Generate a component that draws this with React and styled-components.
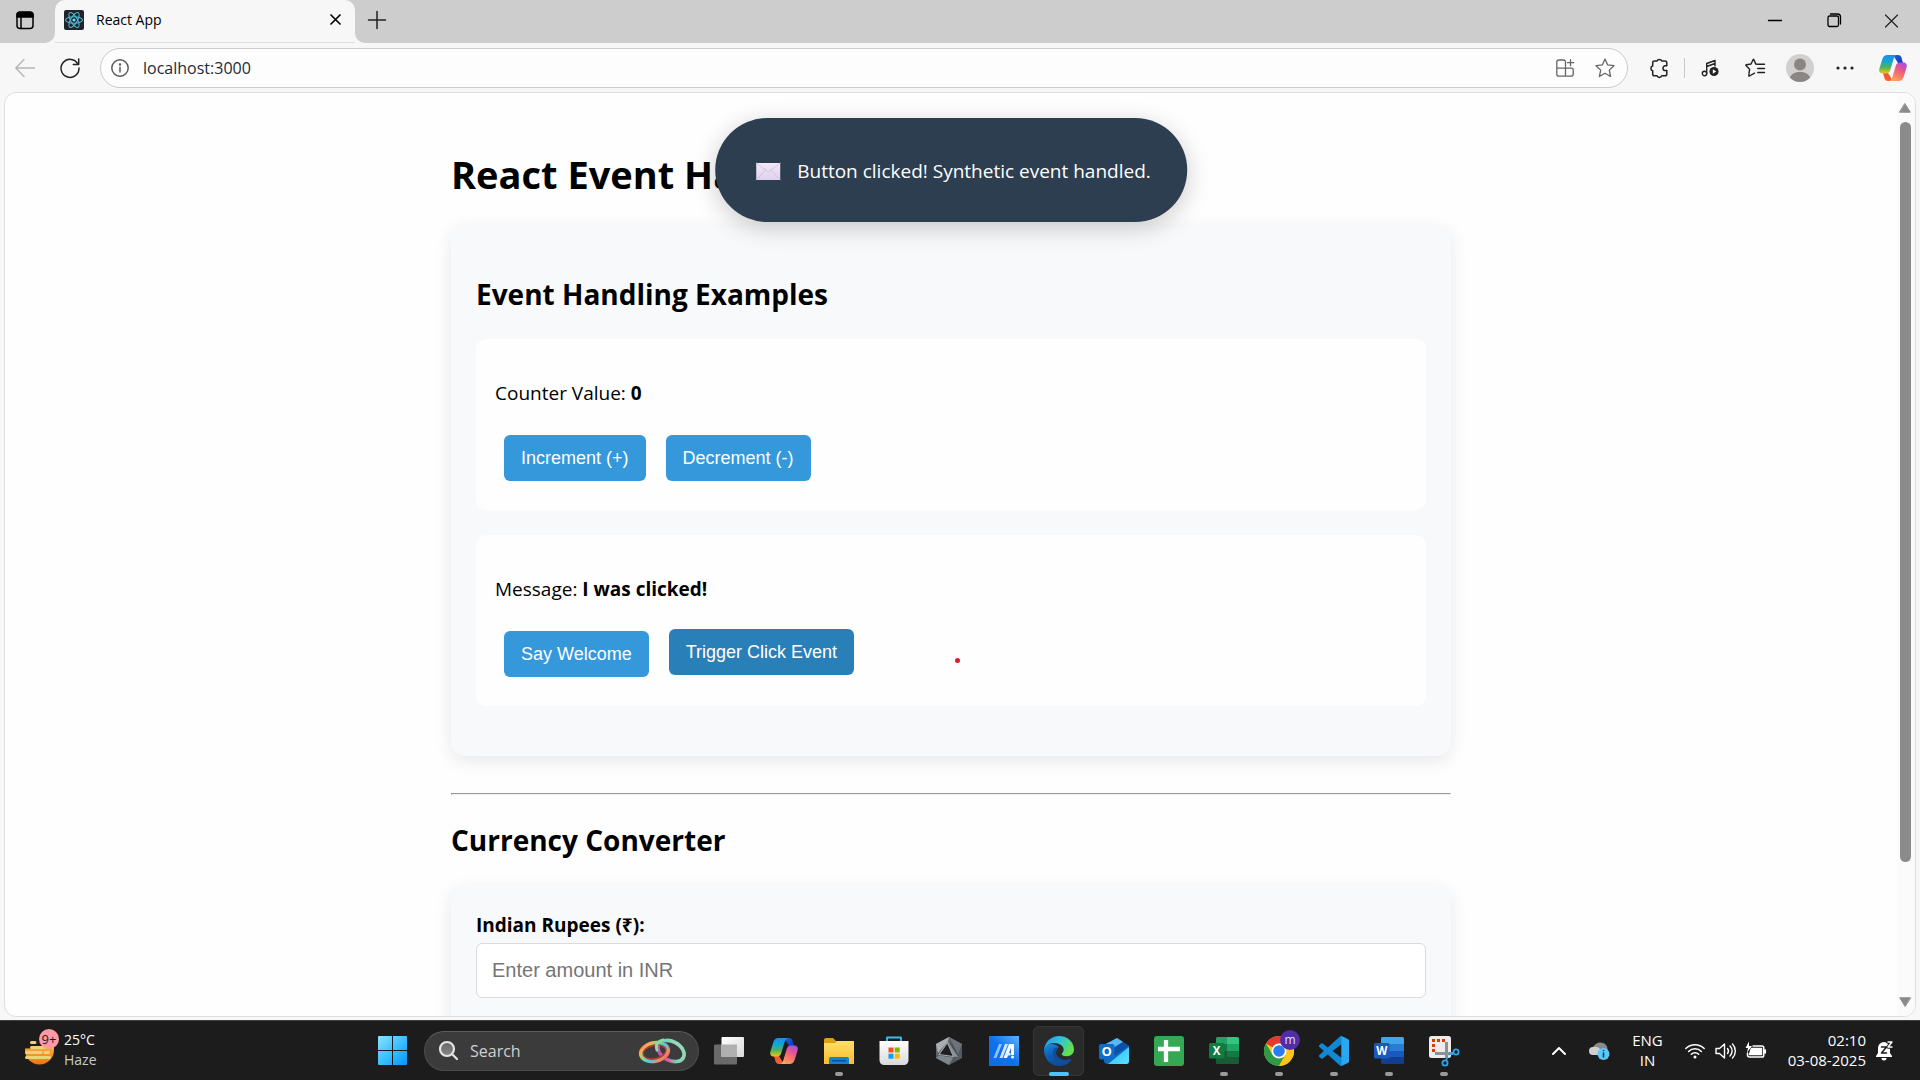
import React, { useState } from "react";
import styled, { createGlobalStyle, css } from "styled-components";

const UI = `"Segoe UI", "Open Sans", "Noto Sans", sans-serif`;
const ARIAL = `"Liberation Sans", Arial, sans-serif`;

const GlobalStyle = createGlobalStyle`
  *, *::before, *::after { box-sizing: border-box; }
  body { margin: 0; font-family: ${UI}; color: #000; overflow: hidden; }
  button { font: inherit; color: inherit; border: 0; padding: 0; background: none; }
  svg { display: block; overflow: visible; }
`;

/* ---------- window frame ---------- */

const Desktop = styled.div`
  display: flex;
  flex-direction: column;
  height: 100vh;
  background: #f7f7f7;
`;

const TabStrip = styled.header`
  display: flex;
  align-items: stretch;
  height: 43px;
  background: #cdcdcd;
  border-bottom: 1px solid #dedede;
`;

const StripStart = styled.div`
  display: flex;
  align-items: center;
  width: 55px;
  padding: 0 0 3px 16px;
  border-bottom-right-radius: 10px;
  background: #cdcdcd;
`;

const TabBacking = styled.div`
  display: flex;
  flex: ${(p) => (p.$grow ? 1 : "none")};
  height: 43px;
  background: linear-gradient(#cdcdcd 50%, #f7f7f7 50%);
`;

const Tab = styled.div`
  display: flex;
  align-items: center;
  gap: 12px;
  width: 300px;
  padding: 0 14px 3px 9px;
  border-radius: 10px 10px 0 0;
  background: #f7f7f7;
  font-size: 14px;
  line-height: 20px;
`;

const TabTitle = styled.span`
  flex: 1;
`;

const StripRest = styled.div`
  display: flex;
  flex: 1;
  align-items: center;
  justify-content: space-between;
  padding: 0 0 3px 13px;
  border-bottom-left-radius: 10px;
  background: #cdcdcd;
`;

const WindowControls = styled.div`
  display: flex;
`;

const IconButton = styled.button`
  display: flex;
  align-items: center;
  justify-content: center;
  flex: none;
  width: ${(p) => p.$w || 32}px;
  height: 32px;
  color: ${(p) => p.$color || "#222"};
`;

const Toolbar = styled.nav`
  display: flex;
  align-items: center;
  height: 49px;
  padding: 0 8px;
`;

const NavButtons = styled.div`
  display: flex;
  gap: 13px;
  padding: 0 14px 0 1px;
`;

const Address = styled.label`
  display: flex;
  flex: 1;
  align-items: center;
  height: 40px;
  padding: 0 6px 0 10px;
  border: 1px solid #cbcbcb;
  border-radius: 20px;
  background: #fdfdfd;
  gap: 14px;
`;

const AddressInput = styled.input`
  flex: 1;
  min-width: 0;
  padding: 0;
  border: 0;
  outline: 0;
  background: none;
  color: #222a3a;
  font: 16px/24px ${UI};
`;

const AddressTools = styled.div`
  display: flex;
  gap: 8px;
`;

const Actions = styled.div`
  display: flex;
  align-items: center;
  gap: 13px;
  padding-left: 15px;
`;

const Divider = styled.span`
  width: 1px;
  height: 20px;
  margin: 0 -4px;
  background: #c8c8c8;
`;

/* ---------- page ---------- */

const Viewport = styled.div`
  position: relative;
  display: flex;
  flex: 1;
  min-height: 0;
  margin: 0 4px 3px;
  overflow: hidden;
  border: 1px solid #dedede;
  border-radius: 12px;
  background: #fefefe;
`;

const Scroller = styled.main`
  position: relative;
  flex: 1;
  overflow: hidden;
`;

const Container = styled.div`
  max-width: 1000px;
  margin: 0 auto;
  padding-top: 54px;
`;

const Title = styled.h1`
  margin: 0 0 24px;
  font-size: 38px;
  line-height: 54px;
  font-weight: 700;
  white-space: nowrap;
`;

const Card = styled.section`
  padding: 25px;
  border-radius: 14px;
  background: #f8f9fb;
  box-shadow: 0 5px 18px rgba(0, 0, 0, 0.09);
`;

const Heading = styled.h2`
  margin: 24px 0;
  font-size: 28px;
  line-height: 41px;
  font-weight: 700;
`;

const Panel = styled.div`
  margin-bottom: 25px;
  padding: 20px 19px;
  border-radius: 10px;
  background: #fefefe;
`;

const Line = styled.p`
  margin: 20px 0 18px;
  font-size: 19px;
  line-height: 29px;
`;

const ButtonRow = styled.div`
  display: flex;
  gap: 20px;
  padding: 9px;
`;

const ActionButton = styled.button`
  height: 46px;
  padding: 0 17px;
  border-radius: 6px;
  background: #3498db;
  color: #fff;
  font: 18px/20px ${ARIAL};
  ${(p) =>
    p.$hovered &&
    css`
      background: #2980b9;
      transform: translateY(-2px);
    `}
`;

const Rule = styled.hr`
  margin: 37px 0 25px;
  border: 1px solid #eee;
  border-top-color: #9a9a9a;
  border-left-color: #9a9a9a;
`;

const Label = styled.label`
  display: block;
  margin-bottom: 2px;
  font-size: 19px;
  line-height: 31px;
  font-weight: 700;
`;

const Field = styled.input`
  display: block;
  width: 100%;
  height: 55px;
  padding: 0 15px;
  border: 1px solid #d9dbde;
  border-radius: 6px;
  background: #fff;
  outline: 0;
  font: 20px/24px ${ARIAL};
  &::placeholder { color: #757575; opacity: 1; }
`;

const Below = styled.div`
  height: 240px;
`;

const Toast = styled.div`
  position: absolute;
  top: 25px;
  left: 50%;
  display: flex;
  align-items: center;
  gap: 17px;
  height: 104px;
  padding: 2px 36px 0 41px;
  border-radius: 62px;
  background: #2c3e50;
  box-shadow: 0 6px 25px rgba(0, 0, 0, 0.2);
  color: #fff;
  font-size: 19px;
  line-height: 27px;
  white-space: nowrap;
  transform: translateX(-50%);
`;

const Pointer = styled.span`
  position: absolute;
  left: 950px;
  top: 565px;
  width: 5px;
  height: 5px;
  border-radius: 50%;
  background: #e0182d;
`;

const ScrollBar = styled.div`
  display: flex;
  flex-direction: column;
  align-items: center;
  width: 18px;
  padding: 10px 2px 9px 0;
  background: #fbfbfb;
`;

const Track = styled.div`
  flex: 1;
  width: 11px;
  margin: 9px 0;
`;

const Thumb = styled.div`
  height: 85.5%;
  border-radius: 6px;
  background: #8b8b8b;
`;

/* ---------- taskbar ---------- */

const Taskbar = styled.footer`
  display: flex;
  align-items: stretch;
  flex: none;
  height: 60px;
  border-top: 1px solid #3d3f42;
  background: #1c1c1c;
  color: #fff;
  font-size: 15px;
  line-height: 20px;
`;

const Weather = styled.button`
  display: flex;
  align-items: center;
  flex: none;
  width: 378px;
  padding-left: 25px;
  gap: 5px;
  text-align: left;
  font-size: 14px;
`;

const Muted = styled.span`
  color: #c9c9c9;
`;

const Stack = styled.span`
  display: flex;
  flex-direction: column;
  padding-bottom: 2px;
  text-align: ${(p) => p.$align || "left"};
`;

const Center = styled.div`
  display: flex;
  align-items: center;
`;

const Search = styled.label`
  display: flex;
  align-items: center;
  gap: 12px;
  width: 275px;
  height: 40px;
  margin: 0 2px 0 17px;
  padding: 0 11px 0 14px;
  border: 1px solid #4d4d4d;
  border-top-color: #5c5c5c;
  border-radius: 20px;
  background: #3b3b3b;
`;

const SearchInput = styled.input`
  flex: 1;
  min-width: 0;
  padding: 0;
  border: 0;
  outline: 0;
  background: none;
  font: 16px/22px ${UI};
  &::placeholder { color: #cfcfcf; opacity: 1; }
`;

const AppButton = styled.button`
  position: relative;
  display: flex;
  align-items: center;
  justify-content: center;
  width: 51px;
  height: 50px;
  margin: 0 2px;
  border-radius: 6px;
  ${(p) => p.$state === "active" && css`
    background: #2a2a2a;
    box-shadow: inset 0 0 0 1px #353535;
  `}
  &::after {
    content: "";
    position: absolute;
    bottom: 0;
    width: ${(p) => (p.$state === "active" ? 20 : 8)}px;
    height: 4px;
    border-radius: 2px;
    background: ${(p) => ({ active: "#4cc2ff", open: "#9a9a9a" }[p.$state] || "none")};
  }
`;

const Tray = styled.div`
  display: flex;
  align-items: center;
  margin-left: auto;
  padding-right: 26px;
  gap: 10px;
`;

const TrayGroup = styled.div`
  display: flex;
  align-items: center;
  gap: ${(p) => p.$gap}px;
  padding: 0 ${(p) => p.$pad || 0}px;
`;

/* ---------- drawings ---------- */

const Ico = ({ w = 20, h, vb, children, sw = 1.4, ...rest }) => (
  <svg
    width={w}
    height={h || w}
    viewBox={vb || `0 0 ${w} ${h || w}`}
    fill="none"
    stroke="currentColor"
    strokeWidth={sw}
    strokeLinecap="round"
    strokeLinejoin="round"
    aria-hidden="true"
    {...rest}
  >
    {children}
  </svg>
);

const Pic = (p) => <Ico stroke="none" {...p} />;

const Grad = ({ id, stops, x1 = 0, y1 = 0, x2 = 0, y2 = 1 }) => (
  <linearGradient id={id} x1={x1} y1={y1} x2={x2} y2={y2}>
    {stops.map((c, i) => (
      <stop key={i} offset={i / (stops.length - 1)} stopColor={c} />
    ))}
  </linearGradient>
);

const HiddenDefs = styled.svg`
  position: absolute;
  width: 0;
  height: 0;
`;

const Gradients = () => (
  <HiddenDefs aria-hidden="true">
    <defs>
      <Grad id="cpA" stops={["#1b8ff0", "#12a5d8", "#4fb45a", "#f2c514"]} x2={0} />
      <Grad id="cpB" stops={["#a34df0", "#e4548f", "#f9776a", "#ffa659"]} x1={0.8} x2={0.3} />
      <Grad id="cpC" stops={["#0b6ee0", "#1a2fb8"]} x2={1} />
      <Grad id="cpD" stops={["#f8523a", "#f2622c"]} />
      <Grad id="win" stops={["#8be2ff", "#3cc0ff", "#0a93fb"]} x2={1} />
      <Grad id="sun" stops={["#ffd45c", "#f0730f"]} />
      <Grad id="folder" stops={["#ffdf6b", "#f8bd2b"]} />
      <Grad id="bag" stops={["#ffffff", "#d9d9d9"]} />
      <Grad id="edgeTop" stops={["#1a94e0", "#2fc1e0", "#62e04b"]} x2={1} y2={0.5} />
      <Grad id="edgeLow" stops={["#1a8fe0", "#0f5bb0", "#0c4a94"]} x2={0.6} />
      <Grad id="asus" stops={["#0d6be8", "#0f72ea", "#5fb2ff"]} y1={1} x2={1} y2={0} />
      <Grad id="hex" stops={["#7d838a", "#4a4f56", "#5d636a"]} x2={1} />
      <Grad id="ringA" stops={["#f2685e", "#f0b556", "#6fe0a0", "#4cc3f0", "#f08c5a", "#e34a94"]} x2={1} />
      <Grad id="ringB" stops={["#7fe0a8", "#9bd4c0", "#6dd6b0", "#ec4f9a", "#7e55e0"]} x1={1} x2={0} />
      <Grad id="view" stops={["#ffffff", "#d8d8d8"]} x2={1} />
      <Grad id="mail" stops={["#f3eaf6", "#dfd0ef"]} />
      <Grad id="outl" stops={["#2bb8f2", "#5ce3ff"]} x2={1} />
      <Grad id="lens" stops={["#666", "#888"]} />
    </defs>
  </HiddenDefs>
);

const Copilot = ({ w = 28 }) => (
  <Pic w={w} h={w} vb="0 0 28 28">
    <path d="M14 1h5c2 0 3 1 3.600 3l1.400 5h-5z" fill="url(#cpC)" />
    <path d="M14 27H9c-2 0-3-1-3.600-3L4 19h5z" fill="url(#cpD)" />
    <path d="M8.500 1H18c-2 .5-2.800 2-3.400 4l-3.300 11c-.7 2.200-1.800 3.500-4 3.500H4C1 19.500-.4 17.500.4 14.500L3.400 5C4.300 2.200 5.800 1 8.500 1z" fill="url(#cpA)" />
    <path d="M19.500 27H10c2-.5 2.800-2 3.400-4l3.300-11c.7-2.200 1.800-3.500 4-3.500H24c3 0 4.400 2 3.600 5l-3 9.500c-.9 2.800-2.400 4-5.100 4z" fill="url(#cpB)" />
  </Pic>
);

const ReactMark = () => (
  <Pic w={20}>
    <rect width="20" height="20" rx="2" fill="#20232a" />
    <g fill="none" stroke="#4fb8d4" strokeWidth="1.100">
      {[0, 60, 120].map((a) => (
        <ellipse key={a} cx="10" cy="10" rx="8.500" ry="3.300" transform={`rotate(${a} 10 10)`} />
      ))}
    </g>
    <circle cx="10" cy="10" r="1.600" fill="#61dafb" />
  </Pic>
);

const Office = ({ letter, dark, bars }) => (
  <Pic w={30}>
    <clipPath id={`of${letter}`}><rect x="7" y="1" width="23" height="27" rx="1.500" /></clipPath>
    <g clipPath={`url(#of${letter})`}>
      {bars.map(([x, y, w, h, c], i) => (
        <rect key={i} x={x} y={y} width={w} height={h} fill={c} />
      ))}
    </g>
    <rect y="7" width="15.500" height="15.500" rx="1.500" fill={dark} />
    <text x="7.700" y="18.800" textAnchor="middle" fill="#fff" fontFamily="Open Sans" fontWeight="700" fontSize="11.500">{letter}</text>
  </Pic>
);

const excelBars = [
  [7, 1, 12, 7, "#21a366"], [18, 1, 12, 7, "#33c481"], [7, 8, 12, 7, "#107c41"], [18, 8, 12, 7, "#21a366"],
  [7, 15, 12, 7, "#185c37"], [18, 15, 12, 7, "#107c41"], [7, 21, 23, 8, "#185c37"],
];
const wordBars = [[7, 1, 23, 7, "#41a5ee"], [7, 8, 23, 7, "#2b7cd3"], [7, 15, 23, 7, "#185abd"], [7, 21, 23, 8, "#103f91"]];

const Chrome = () => (
  <Pic w={30}>
    <circle cx="15" cy="15" r="15" fill="#ffc517" />
    <path d="M15 15 2 7.500A15 15 0 0 1 28 7.500H15z" fill="#e33b2e" />
    <path d="M2 7.500A15 15 0 0 0 15 30l6.500-11.300L15 15 8.500 18.700z" fill="#2c9a46" />
    <path d="M15 7.500h13A15 15 0 0 1 15 30l6.500-11.300z" fill="#ffc517" />
    <circle cx="15" cy="15" r="7.500" fill="#fff" />
    <circle cx="15" cy="15" r="5.800" fill="#2b7cf0" />
    <circle cx="26" cy="4" r="10" fill="#512da8" />
    <text x="26" y="8" textAnchor="middle" fill="#e6dcff" fontFamily="Open Sans" fontSize="12">m</text>
  </Pic>
);

const Snip = () => (
  <Pic w={30}>
    <rect y="0" width="22" height="22" rx="2.500" fill="#ececec" />
    <path d="M4.500 16V4.500H16" stroke="#d83b01" strokeWidth="3" strokeDasharray="3 2" strokeLinecap="butt" strokeLinejoin="miter" />
    <path d="M17.500 6v16M6 17.500h18" stroke="#8a9199" strokeWidth="3" strokeLinecap="butt" />
    <g stroke="#2aa4e8" strokeWidth="1.800"><circle cx="27" cy="16" r="2.600" /><circle cx="16" cy="27" r="2.600" /><path d="M24.500 17 20 18.500M17 24.500 18.500 21" /></g>
  </Pic>
);

const apps = [
  { name: "Task View", icon: <Pic w={30}><rect x="0" y="8.500" width="23" height="20" rx="1" fill="#6a6a6a" /><rect x="7.500" y="1" width="22.500" height="20" rx="1" fill="url(#view)" /><path d="M7.500 8.500H23V21H7.500z" fill="#b0b0b0" /></Pic> },
  { name: "Copilot", icon: <Copilot w={28} /> },
  { name: "File Explorer", state: "open", icon: <Pic w={30}><path d="M0 4c0-1 .7-2 2-2h7l3 3h17c.6 0 1 .4 1 1v6H0z" fill="#dd9f0b" /><path d="M0 7h11l2-2h16c.6 0 1 .4 1 1v22H0z" fill="url(#folder)" /><path d="M5 28v-5c0-1.400.8-2 2-2h16c1.200 0 2 .6 2 2v5z" fill="#1183d6" /><path d="M8.500 24.700h13" stroke="#0b4f92" strokeWidth="1.400" /></Pic> },
  { name: "Microsoft Store", icon: <Pic w={30}><path d="M8 6V1.500h14V6" stroke="#37c0ee" strokeWidth="1.800" /><path d="M.5 5h29v19c0 3-2 5-5 5h-19c-3 0-5-2-5-5z" fill="url(#bag)" /><path d="M9.500 11.500h5v5h-5z" fill="#f25022" /><path d="M15.700 11.500h5v5h-5z" fill="#7fba00" /><path d="M9.500 17.700h5v5h-5z" fill="#00a4ef" /><path d="M15.700 17.700h5v5h-5z" fill="#ffb900" /></Pic> },
  { name: "Armoury Crate", icon: <Pic w={30}><path d="M15 1 28 8v14l-13 7L2 22V8z" fill="url(#hex)" /><path d="M15 1 2 8l2 9L14 5z" fill="#a9aeb4" /><path d="M15 1 28 8l-4 10z" fill="#6d737a" /><path d="M13.500 6.500 19.500 20.500 5 18.500z" fill="#1d1f22" stroke="#a4a9af" strokeWidth="1.200" /><path d="M14 5.500 19.500 20.500 24 21z" fill="#8c9299" /><path d="M2 22 15 29 19 21.500 5 19.500z" fill="#80868d" /></Pic> },
  { name: "MyASUS", icon: <Pic w={30}><path d="M0 0h30v30H0z" fill="url(#asus)" /><path d="M10 8h3L7.500 22h-3z" fill="#8cc0ff" /><path d="M16 8h3l-5.500 14h-3z" fill="#cfe4ff" /><path d="M20 8h5v11h-3v-7.500L18 22h-3.500z" fill="#fff" /><path d="M17 17h4.500v2.500H16z" fill="#dcebff" /><circle cx="23.500" cy="21" r="1.500" fill="#fff" /></Pic> },
  { name: "Microsoft Edge", state: "active", icon: <Pic w={30}><path d="M0 14c0 9 6.500 16 15 16 6 0 10.200-3 12-6.300.3-.6-.2-.9-.7-.6C21.500 25.500 12.500 23.500 12 17c-.2-2.600 1.200-4.600 3-5.500C13 8.500 9.500 8 7 8c-4 0-7 3-7 6z" fill="url(#edgeLow)" /><path d="M9 15c-.5 7 4.500 14 12 13.500 3-1 5-3 6-4.800.3-.6-.2-.9-.7-.6C21.500 25.500 12.500 23.500 12 17c-.2-2.600 1.200-4.600 3-5.500-3 0-5.700 1-6 3.500z" fill="#0d4f9e" /><path d="M0 14C1 5.500 7.500 0 15 0c8.500 0 15 6.200 15 13.500 0 4.500-3.500 6.700-7 6.700-3.300 0-5.200-1-5.200-2 0-1 1.900-1.700 1.900-4.600C19.700 10 15.500 7 10.500 7 5 7 1 10 0 14z" fill="url(#edgeTop)" /></Pic> },
  { name: "Outlook", icon: <Pic w={30}><path d="M5 9 18 2l12 8v15c0 2-1 3-3 3H9c-2 0-4-1-4-3z" fill="#0f6cbd" /><path d="m5 9 13-7 6 4-16 10z" fill="#58b8f2" /><path d="m8 16 16-10 6 4-17 11z" fill="#0a4fa8" /><path d="M30 11v14c0 2-1 3-3 3H9z" fill="url(#outl)" /><rect y="8" width="15.500" height="15.500" rx="2" fill="#0f6cc9" /><text x="7.700" y="20.300" textAnchor="middle" fill="#fff" fontFamily="Open Sans" fontWeight="700" fontSize="13">O</text></Pic> },
  { name: "Sheets", icon: <Pic w={30}><rect width="30" height="30" rx="3" fill="#34a853" /><path d="M12 4v22M4 13h22" stroke="#fff" strokeWidth="4.300" strokeLinecap="butt" /></Pic> },
  { name: "Excel", state: "open", icon: <Office letter="X" dark="#107c41" bars={excelBars} /> },
  { name: "Chrome", state: "open", icon: <Chrome /> },
  { name: "Visual Studio Code", state: "open", icon: <Pic w={30} vb="0 0 24 24"><path fill="#1288d4" d="M23.150 2.587 18.210.21a1.494 1.494 0 0 0-1.705.29l-9.460 8.630-4.120-3.128a.999.999 0 0 0-1.276.057L.327 7.261A1 1 0 0 0 .326 8.740L3.899 12 .326 15.260a1 1 0 0 0 .001 1.479L1.650 17.940a.999.999 0 0 0 1.276.057l4.120-3.128 9.460 8.630a1.492 1.492 0 0 0 1.704.290l4.942-2.377A1.500 1.500 0 0 0 24 20.060V3.939a1.500 1.500 0 0 0-.850-1.352zm-5.146 14.861L10.826 12l7.178-5.448v10.896z" /><path fill="#2aa7f2" d="M18 0l5.150 2.587A1.500 1.500 0 0 1 24 3.939V20.060a1.500 1.500 0 0 1-.850 1.352L18 23.900z" /></Pic> },
  { name: "Word", state: "open", icon: <Office letter="W" dark="#185abd" bars={wordBars} /> },
  { name: "Snipping Tool", state: "open", icon: <Snip /> },
];

const STAR = "M10 1l2.700 5.900 6.300.8-4.700 4.400 1.300 6.400L10 15.300l-5.600 3.200 1.300-6.400L1 7.700l6.300-.8z";

/* ---------- sections ---------- */

function BrowserChrome() {
  return (
    <>
      <TabStrip>
        <TabBacking>
          <StripStart>
            <Ico w={18} sw={1.500}><rect x="1" y="1.500" width="16" height="16" rx="3" /><path d="M1 6V4c0-2 1-3 3-3h10c2 0 3 1 3 3v2z" fill="currentColor" /><path d="M5 6v11" /></Ico>
          </StripStart>
        </TabBacking>
        <Tab>
          <ReactMark />
          <TabTitle>React App</TabTitle>
          <Ico w={11} sw={1.600} strokeLinecap="butt"><path d="M.5.5l10 10M10.500.5l-10 10" /></Ico>
        </Tab>
        <TabBacking $grow>
          <StripRest>
            <Ico w={18} sw={1.500} color="#222"><path d="M9 .5v17M.5 9h17" /></Ico>
            <WindowControls>
              <IconButton $w={60} aria-label="Minimize"><Ico w={14} sw={1.300} color="#000"><path d="M.5 7.500h13" /></Ico></IconButton>
              <IconButton $w={58} aria-label="Restore"><Ico w={14} sw={1.300} color="#000"><rect x="1" y="3" width="10.500" height="10.500" rx="1.500" /><path d="M3.500 1h7c2 0 3 1 3 3v7" /></Ico></IconButton>
              <IconButton $w={57} aria-label="Close"><Ico w={13} sw={1.200}><path d="M.5 1l12 12M12.500 1l-12 12" /></Ico></IconButton>
            </WindowControls>
          </StripRest>
        </TabBacking>
      </TabStrip>
      <Toolbar>
        <NavButtons>
          <IconButton $color="#b5b5b5" aria-label="Back"><Ico w={20}><path d="M19.500 10H1M9 1.500.8 10 9 18.500" /></Ico></IconButton>
          <IconButton aria-label="Refresh"><Ico w={20} sw={1.500}><path d="M18 6.200A9 9 0 1 0 19 10M18.700 1v5.400h-5.400" /></Ico></IconButton>
        </NavButtons>
        <Address>
          <Ico w={18} sw={1.400} color="#555"><circle cx="9" cy="9" r="8.200" /><path d="M9 8.300v4.700" /><circle cx="9" cy="5.500" r=".5" fill="currentColor" /></Ico>
          <AddressInput aria-label="Address" defaultValue="localhost:3000" />
          <AddressTools>
            <IconButton $color="#666" aria-label="Install app"><Ico w={18} sw={1.300}><path d="M9.500 9V3c0-1-.6-2-1.800-2H3C1.600 1 .8 1.800.8 3v12c0 1.400.8 2.200 2.200 2.200h12c1.400 0 2.200-.8 2.200-2.200v-4c0-1.200-.8-1.800-2-1.800H.8M9.500 9v8M14.500.7v6M11.500 3.700h6" /></Ico></IconButton>
            <IconButton $color="#666" aria-label="Favorite"><Ico w={20} sw={1.300}><path d={STAR} /></Ico></IconButton>
          </AddressTools>
        </Address>
        <Actions>
          <IconButton aria-label="Extensions"><Ico w={20} sw={1.500}><path d="M5.500 3H8a2.500 2.200 0 0 1 4.800 0H16c1.200 0 1.800.7 1.800 1.800v3h-1.500a2.300 2.300 0 0 0 0 4.700h1.500V16c0 1.200-.7 1.800-1.800 1.800h-3.200a2.500 2.200 0 0 1-4.800 0H5.500c-1.200 0-1.800-.7-1.800-1.800v-3.200a2.500 2.500 0 0 1 0-4.800V4.800C3.700 3.700 4.300 3 5.500 3z" /></Ico></IconButton>
          <Divider />
          <IconButton aria-label="Media"><Ico w={18} sw={1.400}><circle cx="3.500" cy="14.500" r="2.200" /><path d="M5.700 14.500V4.500L14 1.500V7M5.700 7.500 14 4.500" /><circle cx="13" cy="12.500" r="4.600" fill="#222" stroke="none" /><path d="m11.800 10.300 3.400 2.200-3.400 2.200z" fill="#fff" stroke="none" /></Ico></IconButton>
          <IconButton aria-label="Favorites"><Ico w={20} sw={1.400}><path d="M12.500 6.300 10.800 6.100 8.800 1.500Q8.500 1 8.200 1.500L6 6 1.200 6.800Q.5 7 1 7.600L4.600 11.200 3.800 17.500Q3.800 18.400 4.500 18L9.500 15.200M12.800 10.500H19.500M12.800 14.500h6.700M13.500 6.300h6" /></Ico></IconButton>
          <IconButton aria-label="Profile"><Pic w={28}><circle cx="14" cy="14" r="14" fill="#d2d0ce" /><circle cx="14" cy="10.500" r="6" fill="#8a8684" /><path d="M4 23.800c1-4 5-5.800 10-5.800s9 1.800 10 5.800A14 14 0 0 1 4 23.800z" fill="#8a8684" /></Pic></IconButton>
          <IconButton aria-label="Settings"><Pic w={18} h={4}>{[2, 9, 16].map((x) => <circle key={x} cx={x} cy="2" r="1.600" fill="#222" />)}</Pic></IconButton>
          <IconButton $w={38} aria-label="Copilot"><Copilot /></IconButton>
        </Actions>
      </Toolbar>
    </>
  );
}

function Page() {
  const [count, setCount] = useState(0);
  const [message, setMessage] = useState("I was clicked!");
  return (
    <Viewport>
      <Scroller>
        <Container>
          <Title>React Event Handling</Title>
          <Card>
            <Heading>Event Handling Examples</Heading>
            <Panel>
              <Line>Counter Value: <b>{count}</b></Line>
              <ButtonRow>
                <ActionButton onClick={() => setCount(count + 1)}>Increment (+)</ActionButton>
                <ActionButton onClick={() => setCount(count - 1)}>Decrement (-)</ActionButton>
              </ButtonRow>
            </Panel>
            <Panel>
              <Line>Message: <b>{message}</b></Line>
              <ButtonRow>
                <ActionButton onClick={() => setMessage("Welcome!")}>Say Welcome</ActionButton>
                <ActionButton $hovered onClick={() => setMessage("I was clicked!")}>Trigger Click Event</ActionButton>
              </ButtonRow>
            </Panel>
          </Card>
          <Rule />
          <Heading>Currency Converter</Heading>
          <Card>
            <Label htmlFor="inr">Indian Rupees (₹):</Label>
            <Field id="inr" placeholder="Enter amount in INR" />
            <Below />
          </Card>
        </Container>
        <Toast role="status">
          <Pic w={24} h={17}><path d="M0 0h24v17H0z" fill="url(#mail)" /><path d="m0 0 12 9L24 0M0 17l9-9.500M24 17l-9-9.500" stroke="#cdbcdc" strokeWidth=".8" /></Pic>
          Button clicked! Synthetic event handled.
        </Toast>
        <Pointer />
      </Scroller>
      <ScrollBar>
        <Pic w={12} h={10}><path d="M6 .8 11.300 9.200H.7z" fill="#8b8b8b" stroke="#8b8b8b" strokeWidth="1" /></Pic>
        <Track><Thumb /></Track>
        <Pic w={12} h={10}><path d="M6 9.200.7.8h10.600z" fill="#8b8b8b" stroke="#8b8b8b" strokeWidth="1" /></Pic>
      </ScrollBar>
    </Viewport>
  );
}

function WindowsTaskbar() {
  return (
    <Taskbar>
      <Weather>
        <Pic w={34} h={36}>
          <circle cx="14.500" cy="17" r="14.500" fill="url(#sun)" />
          <path d="M-1 1h22v14.500H-1z" fill="#1c1c1c" />
          <path d="M17 13h12v3H17z" fill="#f7b733" />
          <path d="M6.500 9.500h3.500M6.500 14.500h12M1.500 19.500h14.500M20 19.500h3.500M1.500 24.500h23" stroke="#f0d078" strokeWidth="3" />
          <circle cx="24" cy="6" r="10" fill="#ff99a4" />
          <text x="24" y="11" textAnchor="middle" fill="#1c1c1c" fontFamily="Open Sans" fontSize="13">9+</text>
        </Pic>
        <Stack><span>25°C</span><Muted>Haze</Muted></Stack>
      </Weather>
      <Center>
        <button aria-label="Start"><Pic w={29}><path d="M0 1a1 1 0 0 1 1-1h13v14H0zM15 0h13a1 1 0 0 1 1 1v13H15zM0 15h14v14H1a1 1 0 0 1-1-1zM15 15h14v13a1 1 0 0 1-1 1H15z" fill="url(#win)" /></Pic></button>
        <Search>
          <Ico w={19} sw={2.200} color="#e4e4e4"><circle cx="8" cy="8" r="7" fill="url(#lens)" /><path d="m13.200 13.200 4.800 4.800" /></Ico>
          <SearchInput aria-label="Search" placeholder="Search" />
          <Pic w={48} h={26}>
            <ellipse cx="32" cy="13" rx="14" ry="9.500" transform="rotate(28 32 13)" stroke="url(#ringB)" strokeWidth="3.600" />
            <ellipse cx="15.500" cy="14" rx="13.500" ry="8.500" transform="rotate(-12 15.500 14)" stroke="#a8402e" strokeWidth="5" />
            <ellipse cx="15.500" cy="14" rx="14" ry="9.300" transform="rotate(-12 15.500 14)" stroke="url(#ringA)" strokeWidth="3.400" />
            <path d="M18 12c-2-5 1-9 6-10" stroke="#86dca8" strokeWidth="3" />
          </Pic>
        </Search>
        {apps.map((a) => (
          <AppButton key={a.name} aria-label={a.name} $state={a.state}>{a.icon}</AppButton>
        ))}
      </Center>
      <Tray>
        <TrayGroup $gap={23}>
          <Ico w={14} h={8} sw={2}><path d="M1 7l6-6 6 6" /></Ico>
          <Pic w={20} h={18}><path d="M5 13a5 5 0 0 1 0-9 7 6 0 0 1 12-1c2 2 2 7 0 9z" fill="#8a8a8a" /><path d="M4 13a4 4 0 0 1 0-8c3-1 6 0 8 3v5z" fill="#cfcfcf" /><circle cx="14.500" cy="12" r="6" fill="#5cc8ff" /><path d="M14.500 11v4M14.500 8.500v.1" stroke="#143" strokeWidth="1.600" /></Pic>
          <Stack $align="center"><span>ENG</span><span>IN</span></Stack>
        </TrayGroup>
        <TrayGroup $gap={10} $pad={12}>
          <Ico w={20} h={16} sw={1.500}><path d="M.8 5.500a13 13 0 0 1 18.400 0M3.600 8.500a9 9 0 0 1 12.800 0M6.300 11.300a5.200 5.200 0 0 1 7.400 0" /><circle cx="10" cy="14" r="1.500" fill="currentColor" stroke="none" /></Ico>
          <Ico w={20} h={18} sw={1.400}><path d="M1 6.500h3.500L9.500 2v14l-5-4.500H1zM12.500 6.500a4 4 0 0 1 0 5M15 4a7 7 0 0 1 0 10M17.500 2a10 10 0 0 1 0 14" /></Ico>
          <Ico w={21} h={18} sw={1.500}><path d="M8 4h9c1 0 1.800.8 1.800 1.800v7.400c0 1-.8 1.800-1.800 1.800H4.500c-1.200 0-2-.8-2-2V11M20.300 8v3" /><path d="M6.500 6.500h10v6h-12z" fill="currentColor" /><path d="M4-.5.5 6h2.500l-1 4.500L7 4H4z" fill="currentColor" stroke="none" /></Ico>
        </TrayGroup>
        <Stack $align="right"><span>02:10</span><span>03-08-2025</span></Stack>
        <Pic w={18} h={20}><path d="M2 7a6 6 0 0 1 12 0v5l2 3v1H0v-1l2-3zM5.500 17h5a2.500 2.500 0 0 1-5 0z" fill="#fff" /><path d="M5.500 6h5l-5 6h5" stroke="#1c1c1c" strokeWidth="1.500" /><path d="M12 1h4l-4 5h4" stroke="#1c1c1c" strokeWidth="3.500" /><path d="M12 1h4l-4 5h4" stroke="#fff" strokeWidth="1.400" /></Pic>
      </Tray>
    </Taskbar>
  );
}

export default function App() {
  return (
    <Desktop>
      <GlobalStyle />
      <Gradients />
      <BrowserChrome />
      <Page />
      <WindowsTaskbar />
    </Desktop>
  );
}
